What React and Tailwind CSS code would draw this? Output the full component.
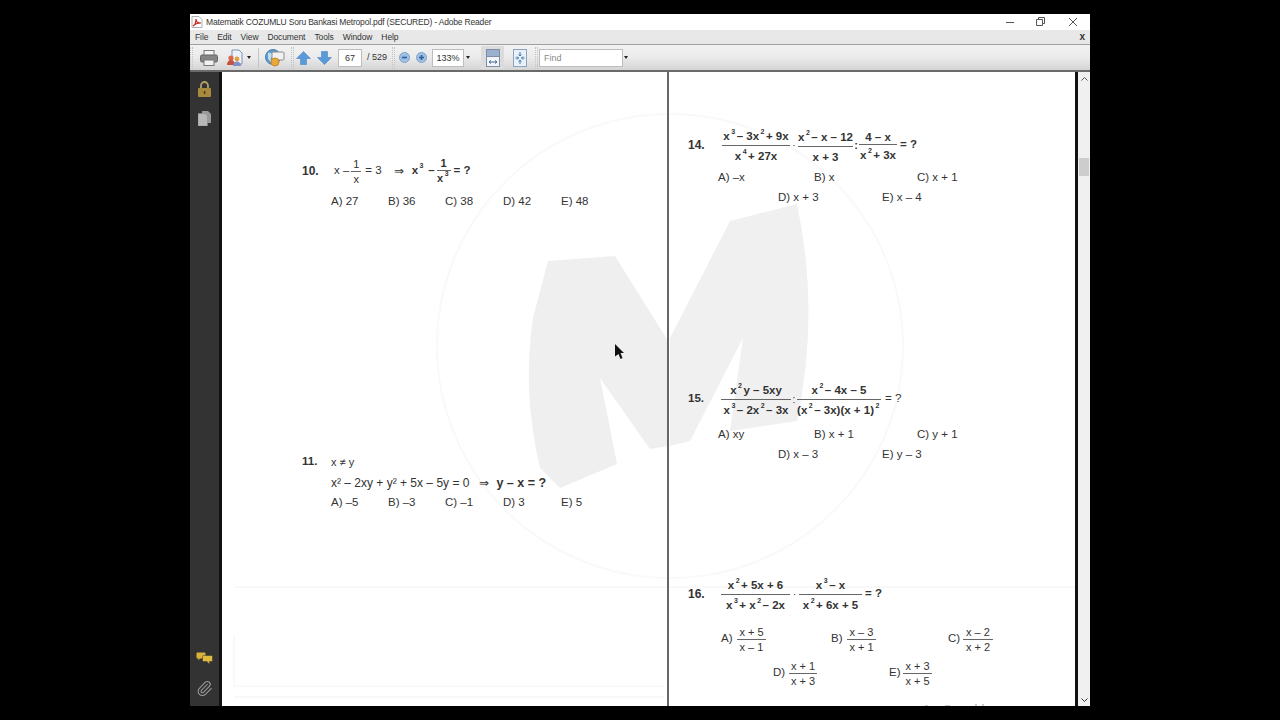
import { Paperclip } from 'lucide-react';

const MENU = ['File', 'Edit', 'View', 'Document', 'Tools', 'Window', 'Help'];

function Sup({ children }) {
  return <span className="relative -top-[6px] text-[7px] mx-[1.5px]">{children}</span>;
}

function Frac({ top, bottom, bold = true, width, spread = false }) {
  return (
    <span className={`inline-flex flex-col items-center shrink-0 leading-[14px] whitespace-nowrap ${spread ? 'text-[11.5px]' : 'text-[11px]'} ${bold ? 'font-bold' : ''} ${width}`}>
      <span className={spread ? 'pt-[3px]' : ''}>{top}</span>
      <span className="w-full h-px shrink-0 bg-[#666]" />
      <span className={spread ? 'pt-[3px]' : ''}>{bottom}</span>
    </span>
  );
}

function Options({ items, offsets, className = '' }) {
  return (
    <div className={`flex h-4 items-center text-[11.5px] leading-4 text-[#333] ${className}`}>
      {items.map((t, i) => (
        <span key={t} className={`${offsets[i]} shrink-0 whitespace-nowrap`}>{t}</span>
      ))}
    </div>
  );
}

const LEFT_COLS = ['w-[57px]', 'w-[57px]', 'w-[58px]', 'w-[58px]', 'w-[40px]'];
const RIGHT_TOP = ['w-[96px]', 'w-[103px]', 'w-[50px]'];
const RIGHT_BOT = ['ml-[60px] w-[104px]', 'w-[60px]'];

function Grip() {
  return <span className="block w-[3px] h-[22px] shrink-0 border-x border-dotted border-[#c4c4c4]" />;
}

function Caret({ className = '' }) {
  return <span className={`w-0 h-0 shrink-0 border-x-[2px] border-x-transparent border-t-[3px] border-t-[#222] ${className}`} />;
}

function ToolbarIcons() {
  return (
    <div className="h-[25px] shrink-0 flex items-center bg-gradient-to-b from-[#f2f2f2] via-[#ebebeb] to-[#d4d4d4] border-b-2 border-[#6a6a6a] box-content">
      <Grip />
      <svg className="ml-[7px] shrink-0" width="18" height="16" viewBox="0 0 18 16">
        <rect x="4" y="0.5" width="10" height="6" fill="#f4f4f4" stroke="#777" />
        <rect x="0.5" y="5" width="17" height="7" rx="1.5" fill="#858585" stroke="#666" />
        <rect x="4" y="10" width="10" height="5.5" fill="#f2f2f2" stroke="#777" />
      </svg>
      <svg className="ml-[8px] shrink-0" width="18" height="18" viewBox="0 0 18 18">
        <path d="M6 1h7l3 3v11H6z" fill="#eef3fb" stroke="#7c93b5" />
        <circle cx="5" cy="9" r="2.6" fill="#d8694c" />
        <path d="M1 16c0-3.4 1.8-5 4-5s4 1.600 4 5z" fill="#c9503f" />
        <circle cx="11" cy="10" r="2.400" fill="#e0a03c" />
        <path d="M7 17c0-3 1.800-4.600 4-4.600s4 1.600 4 4.600z" fill="#7f8fc8" />
      </svg>
      <Caret className="ml-[3px]" />
      <span className="ml-[7px] w-px h-[20px] bg-[#c4c4c4] shrink-0" />
      <svg className="ml-[6px] shrink-0" width="20" height="18" viewBox="0 0 20 18">
        <circle cx="8" cy="8" r="7.500" fill="#5f9bd0" stroke="#4a7fb0" />
        <path d="M3 4c3-1 4 1 6 1s1 3-1 3-3 2-2 4-3-1-3-3z" fill="#bfe0f2" />
        <rect x="7" y="3" width="12" height="8" rx="1" fill="#f1f1f1" stroke="#8d8d8d" />
        <circle cx="10" cy="13" r="4" fill="#e8a93a" stroke="#c98a22" />
      </svg>
      <span className="ml-[6px]"><Grip /></span>
      <svg className="ml-[2px] shrink-0" width="15" height="14" viewBox="0 0 15 14">
        <path d="M7.500 0.500 14.500 7.500H10.500V13.500H4.500V7.500H0.500z" fill="#5a9ad8" stroke="#4a86c2" strokeWidth="0.600" />
      </svg>
      <svg className="ml-[6px] shrink-0" width="15" height="14" viewBox="0 0 15 14">
        <path d="M7.500 13.500 14.500 6.500H10.500V0.500H4.500V6.500H0.500z" fill="#5a9ad8" stroke="#4a86c2" strokeWidth="0.600" />
      </svg>
      <span className="ml-[6px] w-[24px] h-[18px] shrink-0 bg-white border border-[#bdbdbd] text-[9px] leading-[16px] text-center text-[#333]">67</span>
      <span className="ml-[5px] w-[22px] shrink-0 text-[9px] text-[#333] whitespace-nowrap">/ 529</span>
      <span className="ml-[3px]"><Grip /></span>
      <svg className="ml-[4px] shrink-0" width="11" height="11" viewBox="0 0 11 11">
        <circle cx="5.500" cy="5.500" r="5" fill="#9fc0e2" stroke="#7ea3cc" />
        <rect x="3" y="4.700" width="5" height="1.600" fill="#2f5f96" />
      </svg>
      <svg className="ml-[6px] shrink-0" width="11" height="11" viewBox="0 0 11 11">
        <circle cx="5.500" cy="5.500" r="5" fill="#9fc0e2" stroke="#7ea3cc" />
        <path d="M3 4.700h1.700V3h1.600v1.700H8v1.600H6.300V8H4.700V6.300H3z" fill="#2f5f96" />
      </svg>
      <span className="ml-[5px] w-[32px] h-[18px] shrink-0 bg-white border border-[#bdbdbd] text-[9px] leading-[16px] text-center text-[#333]">133%</span>
      <Caret className="ml-[2px]" />
      <span className="ml-[11px] w-[23px] h-[23px] shrink-0 flex items-center justify-center bg-[#dcdcdc] rounded-[1px]">
        <svg width="14" height="18" viewBox="0 0 14 18">
          <rect x="0.500" y="0.500" width="13" height="17" fill="#f2f5fa" stroke="#7f8ea6" />
          <rect x="0.500" y="0.500" width="13" height="7" fill="#9bb0cc" stroke="#7f8ea6" />
          <path d="M3 13h8M3 13l2-1.500M3 13l2 1.500M11 13l-2-1.500M11 13l-2 1.500" stroke="#4a6a96" fill="none" />
        </svg>
      </span>
      <svg className="ml-[9px] shrink-0" width="14" height="18" viewBox="0 0 14 18">
        <rect x="0.500" y="0.500" width="13" height="17" fill="#e9f0f8" stroke="#8ea3bd" />
        <path d="M7 3v4M5.500 5.500 7 7l1.500-1.500M7 15v-4M5.500 12.500 7 11l1.500 1.500M2.500 9h3M4 7.500 5.500 9 4 10.500M11.500 9h-3M10 7.500 8.500 9l1.500 1.500" stroke="#3f79b5" fill="none" />
      </svg>
      <span className="ml-[8px]"><Grip /></span>
      <span className="ml-[1px] w-[84px] h-[18px] shrink-0 bg-white border border-[#bdbdbd] text-[9px] leading-[16px] pl-[4px] text-[#8a8a8a]">Find</span>
      <Caret className="ml-[1px]" />
    </div>
  );
}

function Sidebar() {
  return (
    <aside className="w-[29px] shrink-0 bg-[#333333] border-r-[3px] border-[#111] box-content flex flex-col items-center">
      <svg className="mt-[9px] shrink-0" width="15" height="16" viewBox="0 0 15 16">
        <path d="M4 7V4.500a3.500 3.500 0 0 1 7 0V7" fill="none" stroke="#b2a06a" strokeWidth="1.800" />
        <rect x="1" y="7" width="13" height="9" rx="1" fill="#a88a3e" />
        <rect x="6.800" y="10" width="1.500" height="3" fill="#4d3c12" />
      </svg>
      <svg className="mt-[14px] shrink-0" width="13" height="15" viewBox="0 0 13 15">
        <path d="M4 0h6l3 3v9H4z" fill="#9a9a9a" />
        <path d="M0 2.500h7l2.500 2.500V15H0z" fill="#b8b8b8" stroke="#8a8a8a" strokeWidth="0.500" />
      </svg>
      <svg className="mt-auto shrink-0" width="17" height="13" viewBox="0 0 17 13">
        <path d="M1.500 0.500h7a1 1 0 0 1 1 1v4a1 1 0 0 1-1 1H4l-1.500 2v-2h-1a1 1 0 0 1-1-1v-4a1 1 0 0 1 1-1z" fill="#d9b23a" />
        <path d="M7.500 3.500h8a1 1 0 0 1 1 1v4a1 1 0 0 1-1 1h-2v3l-2.500-3H7.500a1 1 0 0 1-1-1v-4a1 1 0 0 1 1-1z" fill="#e0ba40" stroke="#333" strokeWidth="0.500" />
      </svg>
      <Paperclip className="mt-[15px] mb-[9px] shrink-0 text-[#9a9a9a]" size={17} strokeWidth={1.500} />
    </aside>
  );
}

function Watermark() {
  return (
    <svg className="absolute inset-0 pointer-events-none" width="853" height="635" viewBox="222 71 853 635">
      <path d="M548 260 615 255 668 340 668 445 650 448 600 377 617 463 560 487 540 467Q522 390 533 317z" fill="#efeff0" />
      <path d="M670 337 730 220 797 203Q820 310 797 420L730 430 743 337 690 440 670 445z" fill="#f0f0f1" />
      <ellipse cx="670" cy="345" rx="233" ry="232" fill="none" stroke="#f9f9f9" strokeWidth="2" />
      <path d="M234 586H1075M234 685H664M234 696H664M234 635V685" stroke="#f2f2f2" fill="none" />
      <path d="M925 705h3M945 705h5M975 704h2M982 704h2" stroke="#999" fill="none" />
    </svg>
  );
}

function LeftPage() {
  return (
    <div className="relative w-[445px] shrink-0 pl-[80px] text-[#333]">
      <div className="flex h-[40px] mt-[79px] items-center">
        <span className="w-[32px] shrink-0 text-[12px] font-bold">10.</span>
        <span className="text-[11.5px]">x –</span>
        <Frac top="1" bottom="x" bold={false} width="w-[10px] mx-[2px]" />
        <span className="text-[11.5px] ml-[2px]">= 3</span>
        <span className="text-[12px] ml-[12px]">⇒</span>
        <span className="text-[11.5px] font-bold ml-[8px]">x<Sup>3</Sup> –</span>
        <Frac top="1" bottom={<>x<Sup>3</Sup></>} width="w-[14px] mx-[2px]" />
        <span className="text-[11.5px] font-bold ml-[1px]">= ?</span>
      </div>
      <div className="pl-[29px] mt-[2px]">
        <Options items={['A) 27', 'B) 36', 'C) 38', 'D) 42', 'E) 48']} offsets={LEFT_COLS} />
      </div>
      <div className="flex h-5 mt-[243px] items-center">
        <span className="w-[29px] shrink-0 text-[11.5px] font-bold">11.</span>
        <span className="text-[11px]">x ≠ y</span>
      </div>
      <div className="pl-[29px] mt-px text-[12px] h-5 flex items-center whitespace-nowrap">
        <span>x² – 2xy + y² + 5x – 5y = 0</span>
        <span className="ml-[10px]">⇒</span>
        <span className="ml-[7px] text-[12.5px] font-bold">y – x = ?</span>
      </div>
      <div className="pl-[29px] mt-px">
        <Options items={['A) –5', 'B) –3', 'C) –1', 'D) 3', 'E) 5']} offsets={LEFT_COLS} />
      </div>
    </div>
  );
}

function RightPage() {
  return (
    <div className="relative flex-1 pl-[19px] text-[#333] overflow-hidden">
      <div className="flex h-[30px] mt-[58px] items-center">
        <span className="w-[34px] shrink-0 text-[12px] font-bold">14.</span>
        <Frac spread top={<>x<Sup>3</Sup>– 3x<Sup>2</Sup>+ 9x</>} bottom={<>x<Sup>4</Sup>+ 27x</>} width="w-[68px]" />
        <span className="w-[8px] text-center text-[10px]">·</span>
        <Frac spread top={<>x<Sup>2</Sup>– x – 12</>} bottom="x + 3" width="w-[55px]" />
        <span className="w-[6px] text-center text-[11px] font-bold">:</span>
        <Frac spread top="4 – x" bottom={<>x<Sup>2</Sup>+ 3x</>} width="w-[38px]" />
        <span className="ml-[3px] text-[11.5px] font-bold whitespace-nowrap">= ?</span>
      </div>
      <div className="pl-[30px] mt-[9px]">
        <Options items={['A) –x', 'B) x', 'C) x + 1']} offsets={RIGHT_TOP} />
        <Options items={['D) x + 3', 'E) x – 4']} offsets={RIGHT_BOT} className="mt-1" />
      </div>

      <div className="flex h-[30px] mt-[179px] items-center">
        <span className="w-[33px] shrink-0 text-[11.5px] font-bold">15.</span>
        <Frac spread top={<>x<Sup>2</Sup>y – 5xy</>} bottom={<>x<Sup>3</Sup>– 2x<Sup>2</Sup>– 3x</>} width="w-[70px]" />
        <span className="w-[6px] text-center text-[10px]">:</span>
        <Frac spread top={<>x<Sup>2</Sup>– 4x – 5</>} bottom={<>(x<Sup>2</Sup>– 3x)(x + 1)<Sup>2</Sup></>} width="w-[84px]" />
        <span className="ml-[4px] text-[11.5px] whitespace-nowrap">= ?</span>
      </div>
      <div className="pl-[30px] mt-[12px]">
        <Options items={['A) xy', 'B) x + 1', 'C) y + 1']} offsets={RIGHT_TOP} />
        <Options items={['D) x – 3', 'E) y – 3']} offsets={RIGHT_BOT} className="mt-1" />
      </div>

      <div className="flex h-[30px] mt-[117px] items-center">
        <span className="w-[33px] shrink-0 text-[12px] font-bold">16.</span>
        <Frac spread top={<>x<Sup>2</Sup>+ 5x + 6</>} bottom={<>x<Sup>3</Sup>+ x<Sup>2</Sup>– 2x</>} width="w-[69px]" />
        <span className="w-[9px] text-center text-[10px]">·</span>
        <Frac spread top={<>x<Sup>3</Sup>– x</>} bottom={<>x<Sup>2</Sup>+ 6x + 5</>} width="w-[63px]" />
        <span className="ml-[3px] text-[11.5px] font-bold whitespace-nowrap">= ?</span>
      </div>
      <div className="flex h-[30px] mt-[15px] items-center text-[11.5px] pl-[33px]">
        <span className="w-[16px] shrink-0">A)</span>
        <Frac top="x + 5" bottom="x – 1" bold={false} width="w-[29px]" />
        <span className="ml-[65px] w-[16px] shrink-0">B)</span>
        <Frac top="x – 3" bottom="x + 1" bold={false} width="w-[29px]" />
        <span className="ml-[72px] w-[15px] shrink-0">C)</span>
        <Frac top="x – 2" bottom="x + 2" bold={false} width="w-[30px]" />
      </div>
      <div className="flex h-[30px] mt-[4px] items-center text-[11.5px] pl-[85px]">
        <span className="w-[16px] shrink-0">D)</span>
        <Frac top="x + 1" bottom="x + 3" bold={false} width="w-[28px]" />
        <span className="ml-[72px] w-[14px] shrink-0">E)</span>
        <Frac top="x + 3" bottom="x + 5" bold={false} width="w-[29px]" />
      </div>
    </div>
  );
}

export default function App() {
  return (
    <div className="w-[1280px] h-[720px] bg-black pt-[14px] pl-[190px] overflow-hidden font-['Liberation_Sans',sans-serif]">
      <div className="w-[900px] h-[692px] flex flex-col bg-white">
        <div className="h-4 shrink-0 flex items-center bg-white text-[8.5px] tracking-[-0.18px] text-[#333]">
          <svg className="ml-[1px] shrink-0" width="12" height="12" viewBox="0 0 12 12">
            <path d="M1 0.500h7l3 3v8H1z" fill="#fff" stroke="#b0b0b0" />
            <path d="M2 10c2-1 3-4 3-7 0 3 2 4 5 4-3 0-6 1-8 3z" fill="none" stroke="#c8281e" strokeWidth="1.200" />
          </svg>
          <span className="ml-[3px] whitespace-nowrap">Matematik COZUMLU Soru Bankasi Metropol.pdf (SECURED) - Adobe Reader</span>
          <svg className="ml-auto mr-[4px] shrink-0" width="80" height="12" viewBox="0 0 80 12">
            <path d="M0 6.500H8" stroke="#555" />
            <path d="M30.500 3.500h6v6h-6zM32.500 3.500v-2h6v6h-2" stroke="#555" fill="none" />
            <path d="M63 2l8 8M71 2l-8 8" stroke="#555" fill="none" />
          </svg>
        </div>
        <div className="h-[14px] shrink-0 flex items-center bg-[#e8e8e8] border-b border-[#a0a0a0] box-content text-[8.5px] tracking-[-0.1px] text-[#333] pl-[5px] gap-[9px]">
          {MENU.map((m) => (
            <span key={m}>{m}</span>
          ))}
          <span className="ml-auto mr-[5px] font-bold text-[10px] leading-none">x</span>
        </div>
        <ToolbarIcons />
        <div className="flex-1 min-h-0 flex">
          <Sidebar />
          <div className="relative w-[853px] shrink-0 flex bg-white overflow-hidden">
            <Watermark />
            <LeftPage />
            <span className="relative w-[2px] shrink-0 bg-[#666]" />
            <RightPage />
            <svg className="absolute left-[393px] top-[272px]" width="10" height="15" viewBox="0 0 10 15">
              <path d="M0 0 9 9H5.500L7.500 14 5.500 15 3.500 10 0 12.500z" fill="#111" />
            </svg>
          </div>
          <div className="w-[3px] shrink-0 bg-[#111]" />
          <div className="flex-1 flex flex-col items-center bg-[#f0f0f0]">
            <svg className="mt-[5px] shrink-0" width="7" height="4" viewBox="0 0 7 4">
              <path d="M0.500 3.500 3.500 0.500 6.500 3.500" fill="none" stroke="#555" />
            </svg>
            <span className="mt-[77px] w-[10px] h-[18px] shrink-0 bg-[#cdcdcd]" />
            <svg className="mt-auto mb-[4px] shrink-0" width="7" height="4" viewBox="0 0 7 4">
              <path d="M0.500 0.500 3.500 3.500 6.500 0.500" fill="none" stroke="#333" />
            </svg>
          </div>
        </div>
      </div>
    </div>
  );
}
